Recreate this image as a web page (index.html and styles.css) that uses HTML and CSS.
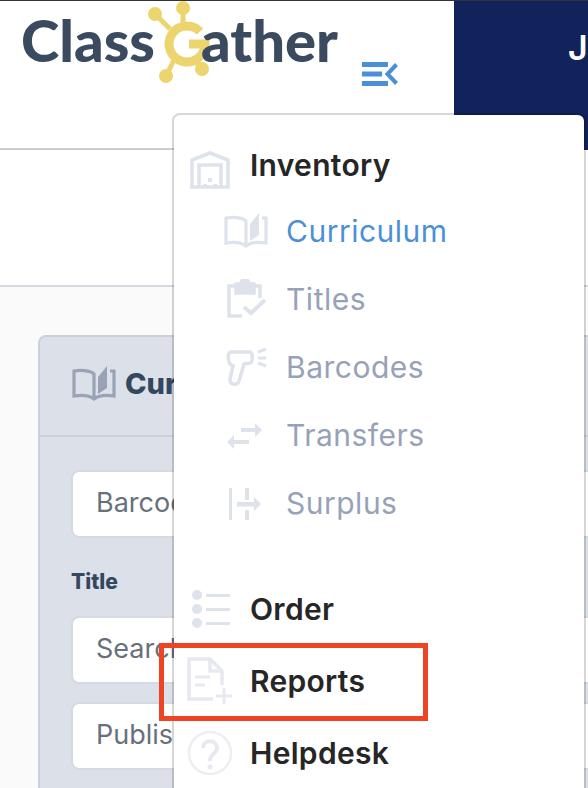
FILE: index.html

```html
<!DOCTYPE html>
<html lang="en">
<head>
    <meta charset="UTF-8">
    <meta name="viewport" content="width=device-width, initial-scale=1.0">
    <title>ClassGather - Inventory</title>
    <link rel="stylesheet" href="styles.css">
</head>
<body>
<div class="page">
    <header class="topbar">
        <div class="brand">
            <div class="logo">
                <span class="logo-text">Class</span>
                <svg class="logo-g" width="62" height="84" viewBox="0 0 62 84">
                    <g fill="none" stroke="#ecd56e">
                        <path d="M52 30.500A18 18 0 1 0 57 43H41" stroke-width="9"/>
                        <path d="M7 13L22 28M35 7V24M18 75L27 57M54 68L47 60" stroke-width="5"/>
                    </g>
                    <g fill="#ecd56e">
                        <circle cx="7" cy="13" r="7"/>
                        <circle cx="35" cy="7" r="7"/>
                        <circle cx="18" cy="75" r="7"/>
                        <circle cx="54" cy="68" r="7"/>
                    </g>
                </svg>
                <span class="logo-text">ather</span>
            </div>
            <svg class="menu-toggle" width="36" height="24" viewBox="0 0 36 24">
                <path d="M0 2.500H26M0 12H20M0 21.500H26" stroke="#4a90d9" stroke-width="5" fill="none"/>
                <path d="M34.500 2.500L25.500 12L34.500 21.500" stroke="#4a90d9" stroke-width="4" fill="none"/>
            </svg>
        </div>
        <div class="user-box"><span class="user-name">John</span></div>
    </header>
    <div class="subbar"></div>
    <main class="content">
        <section class="card">
            <div class="card-head">
                <svg class="card-icon" width="46" height="38" viewBox="0 0 46 38">
                    <use href="#book"/>
                </svg>
                <span class="card-title">Curriculum</span>
            </div>
            <div class="card-body">
                <div class="field">Barcode</div>
                <div class="field-label">Title</div>
                <div class="field">Search</div>
                <div class="field">Publisher</div>
            </div>
        </section>
    </main>

    <nav class="menu">
        <div class="menu-item main first">
            <svg class="main-icon warehouse" width="42" height="38" viewBox="0 0 42 38" fill="none" stroke="#dde2eb" stroke-width="3.500">
                <path d="M3 36V9L21 2L39 9V36Z M10 36V14H32V36"/>
                <path d="M14 35h4M19 29h4M24 35h4" stroke-width="4"/>
            </svg>
            <span>Inventory</span>
        </div>
        <div class="menu-item sub active">
            <svg class="sub-icon" width="46" height="38" viewBox="0 0 46 38">
                <defs>
                    <g id="book">
                        <path d="M23 33V9C19 5 9 5 3 6V31C9 30 18 30 23 34C28 30 37 30 43 31V6H39" fill="none" stroke="currentColor" stroke-width="3.200"/>
                        <path d="M27 29V12L36 1V23Z" fill="currentColor"/>
                    </g>
                </defs>
                <use href="#book"/>
            </svg>
            <span>Curriculum</span>
        </div>
        <div class="menu-item sub">
            <svg class="sub-icon" width="46" height="40" viewBox="0 0 46 40" fill="none" stroke="#dde2eb" stroke-width="3.500">
                <path d="M13 7H6V37H19M31 7H37V19"/>
                <path d="M13 5H18C18 -1 26 -1 26 5H31V14H13Z" fill="#dde2eb"/>
                <path d="M21 28L28 34L42 21" stroke-width="4"/>
            </svg>
            <span>Titles</span>
        </div>
        <div class="menu-item sub">
            <svg class="sub-icon" width="46" height="38" viewBox="0 0 46 38" fill="none" stroke="#dde2eb" stroke-width="3.500">
                <path d="M8 4H27C30 4 30 14 27 15L21 16L16 33C15 38 6 37 7 31L10 18C4 16 4 5 8 4Z"/>
                <path d="M35 4L43 1M35 10H43M35 15L43 18" stroke-width="3"/>
            </svg>
            <span>Barcodes</span>
        </div>
        <div class="menu-item sub">
            <svg class="sub-icon" width="46" height="30" viewBox="0 0 46 30" fill="#dde2eb">
                <path d="M18 8H32V3L39 10L32 17V12H18Z"/>
                <path d="M4 22L11 15V20H26V24H11V29Z"/>
            </svg>
            <span>Transfers</span>
        </div>
        <div class="menu-item sub">
            <svg class="sub-icon" width="46" height="36" viewBox="0 0 46 36" fill="#dde2eb">
                <path d="M6 3H9V35H6Z M22 3H26V15H22Z M22 25H26V35H22Z"/>
                <path d="M14 17H31V12L38 19L31 26V21.500H14Z"/>
            </svg>
            <span>Surplus</span>
        </div>
        <div class="menu-item main order">
            <svg class="main-icon" width="42" height="40" viewBox="-1 0 42 40" fill="#dde2eb">
                <circle cx="7" cy="6" r="5"/><circle cx="7" cy="20" r="5"/><circle cx="7" cy="34" r="5"/>
                <path d="M16 5H40V8H16Z M16 19H40V22H16Z M16 33H40V36H16Z"/>
            </svg>
            <span>Order</span>
        </div>
        <div class="menu-item main">
            <svg class="main-icon" width="48" height="48" viewBox="0 0 48 48" fill="none" stroke="#e6e9ef" stroke-width="3.500">
                <path d="M27 42H3V2H24L36 14V28M24 2V14H36"/>
                <path d="M9 20H24M9 28H19" stroke-width="3"/>
                <path d="M38 31V47M30 39H46" stroke-width="3"/>
            </svg>
            <span>Reports</span>
        </div>
        <div class="menu-item main">
            <svg class="main-icon" width="46" height="46" viewBox="0 0 46 46" fill="none" stroke="#eceef3" stroke-width="2.500">
                <circle cx="23" cy="23" r="21"/>
                <path d="M16 18C16 9 30 9 30 18C30 24 23 23 23 31" stroke="#e6e9ef" stroke-width="4"/>
                <circle cx="23" cy="37" r="2.500" fill="#e6e9ef" stroke="none"/>
            </svg>
            <span>Helpdesk</span>
        </div>
    </nav>
    <div class="highlight"></div>
</div>
</body>
</html>
```

FILE: styles.css

```css
* { box-sizing: border-box; }
html, body { margin: 0; height: 100%; }
body { font-family: Inter, Lato, Arial, sans-serif; background: #fff; overflow: hidden; }
.page { position: relative; width: 588px; height: 788px; overflow: hidden; border-top: 1px solid #333; }

.topbar { display: flex; height: 149px; background: #fff; border-bottom: 2px solid #c9cdd6; }
.brand { flex: none; width: 454px; position: relative; }
.logo { display: flex; align-items: center; padding: 0 0 0 21px; height: 84px; }
.logo-text { margin-bottom: 7px; font-family: Lato, Arial, sans-serif; font-size: 58px; font-weight: 900; color: #3a4a5f; }
.logo-g { flex: none; margin: 0 -9px 0 -7px; }
.menu-toggle { position: absolute; left: 362px; top: 61px; }
.user-box { flex: 1; margin-bottom: -2px; background: #12235c; padding: 26px 0 0 114px; color: #fff; font-size: 34px; font-weight: 600; }
.user-name { white-space: nowrap; }

.subbar { height: 137px; background: #fff; border-bottom: 2px solid #d5d8df; }
.content { height: 501px; background: #fafafa; padding: 48px 0 0 38px; }

.card { width: 600px; height: 460px; background: #dce0e9; border: 2px solid #cbd0d9; border-radius: 8px 8px 0 0; }
.card-head { display: flex; align-items: center; gap: 8px; height: 100px; padding: 0 0 5px 31px; border-bottom: 2px solid #cbd0d9; color: #9aa3b5; }
.card-title { font-size: 29px; font-weight: 800; color: #33475f; }
.card-body { padding: 33px 0 0 31px; }
.field { height: 68px; margin-bottom: 18px; padding: 0 0 0 23px; line-height: 62px; background: #fff; border: 2px solid #d5d9e1; border-radius: 8px; font-size: 27px; color: #68707c; }
.field-label { margin: 31px 0 21px; line-height: 26px; font-size: 21px; font-weight: 800; color: #33475f; }

.menu { position: absolute; left: 172px; top: 112px; width: 414px; height: 690px; background: #fff; background-clip: padding-box; border: 2px solid rgba(0, 0, 0, .16); border-radius: 8px; padding: 18px 0 0 12px; }
.menu-item { display: flex; align-items: center; }
.menu-item.main { height: 72px; font-size: 30px; font-weight: 600; letter-spacing: .3px; color: #262626; }
.menu-item.main.first { height: 64px; }
.menu-item.order { margin-top: 36px; }
.main-icon { width: 48px; flex: none; margin-right: 16px; }
.warehouse { margin-top: 10px; }
.menu-item.sub { height: 68px; padding-left: 37px; font-size: 30px; letter-spacing: .5px; color: #97a1b8; }
.sub-icon { width: 46px; flex: none; margin-right: 17px; }
.menu-item.active { color: #4a90d9; }
.active .sub-icon { color: #dde2eb; }

.highlight { position: absolute; left: 159px; top: 642px; width: 269px; height: 78px; border: 5px solid #ef4423; }
```
